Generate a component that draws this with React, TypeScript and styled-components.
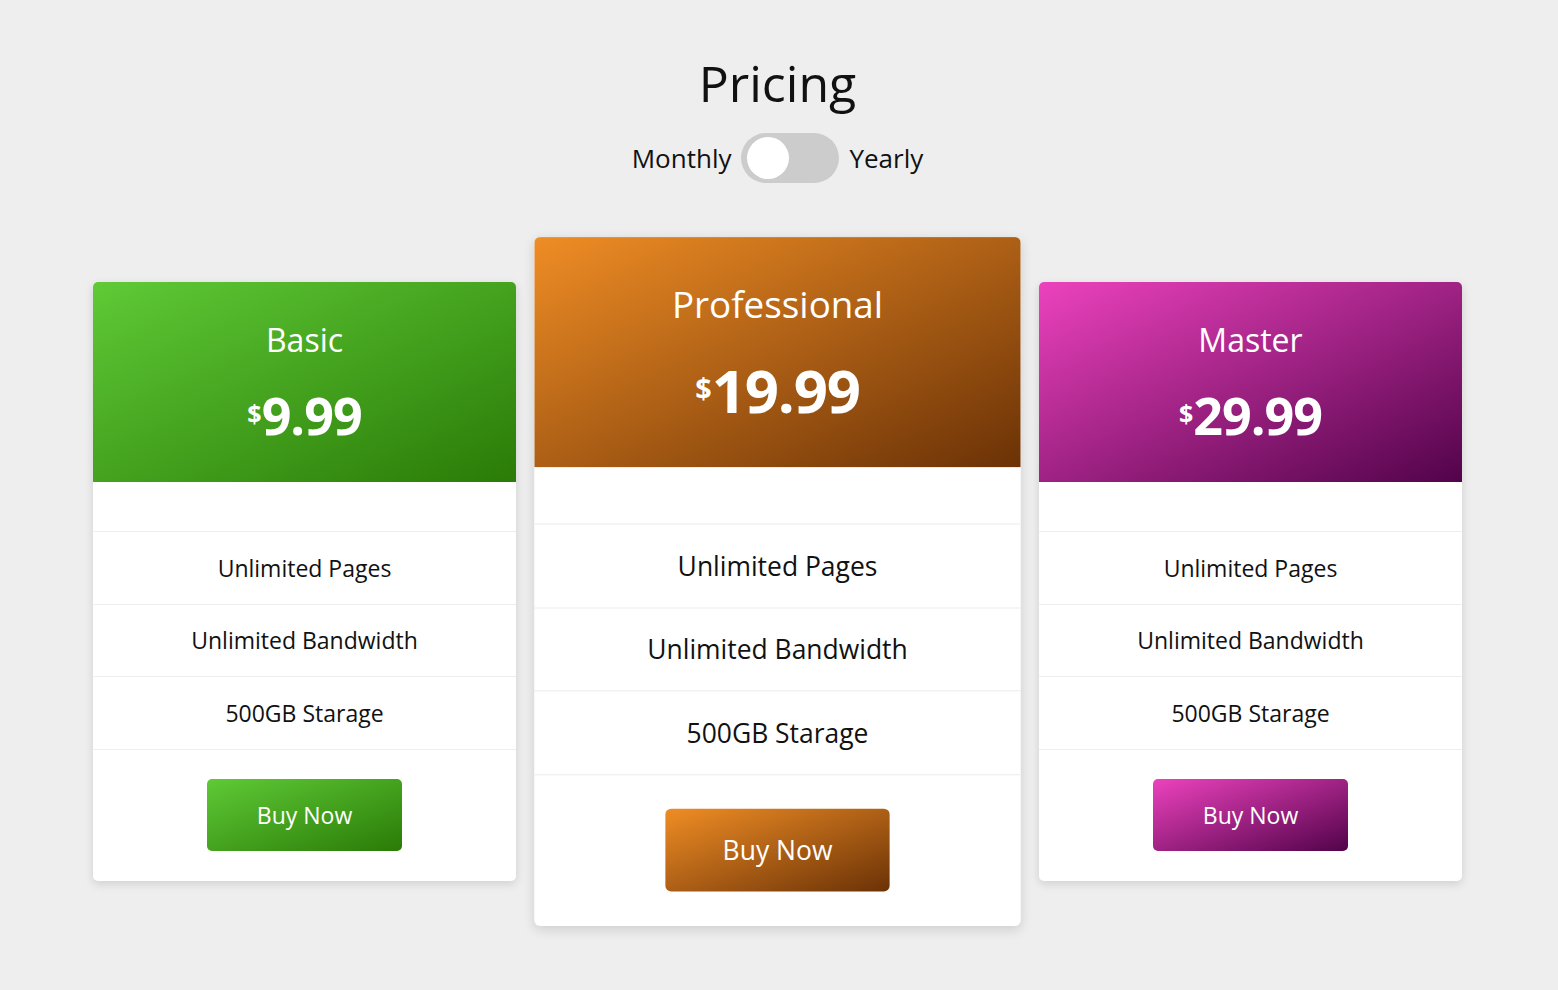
import React from "react";
import styled, { createGlobalStyle } from "styled-components";

const GlobalStyle = createGlobalStyle`
  html, body {
    margin: 0;
    padding: 0;
    background: #eeeeee;
    font-family: "Open Sans", "Noto Sans", sans-serif;
    color: #111111;
  }
  * { box-sizing: border-box; }
`;

type Plan = {
  name: string;
  price: string;
  from: string;
  to: string;
  featured?: boolean;
};

const plans: Plan[] = [
  { name: "Basic", price: "9.99", from: "#5fca36", to: "#2a7b07" },
  { name: "Professional", price: "19.99", from: "#ef8d25", to: "#6b3206", featured: true },
  { name: "Master", price: "29.99", from: "#ec42bd", to: "#52034a" },
];

const features = ["Unlimited Pages", "Unlimited Bandwidth", "500GB Starage"];

const Page = styled.main`
  display: flex;
  flex-direction: column;
  align-items: center;
  padding-top: 53px;
  padding-right: 3px;
  min-height: 990px;
`;

const Title = styled.h1`
  margin: 0;
  font-size: 50px;
  line-height: 60px;
  font-weight: 400;
  color: #111;
`;

const ToggleRow = styled.div`
  display: flex;
  align-items: center;
  gap: 10px;
  margin-top: 20px;
  height: 50px;
`;

const ToggleLabel = styled.span`
  font-size: 26px;
  color: #111;
`;

const Switch = styled.div`
  width: 98px;
  height: 50px;
  border-radius: 25px;
  background: #cccccc;
  display: flex;
  align-items: center;
  padding-left: 6px;
`;

const Knob = styled.div`
  width: 42px;
  height: 42px;
  border-radius: 50%;
  background: #ffffff;
`;

const Cards = styled.section`
  display: flex;
  justify-content: center;
  align-items: center;
  gap: 50px;
  margin-top: 99px;
`;

const Card = styled.article<{ $featured?: boolean }>`
  width: 423px;
  background: #ffffff;
  border-radius: 5px;
  overflow: hidden;
  box-shadow: 0 3px 10px rgba(0, 0, 0, 0.13);
  transform: ${(p) => (p.$featured ? "scale(1.15)" : "none")};
  position: relative;
  z-index: ${(p) => (p.$featured ? 1 : 0)};
`;

const Header = styled.header<{ $from: string; $to: string }>`
  height: 200px;
  display: flex;
  flex-direction: column;
  align-items: center;
  padding-top: 42px;
  color: #ffffff;
  background: linear-gradient(to bottom right, ${(p) => p.$from}, ${(p) => p.$to});
`;

const PlanName = styled.h2`
  margin: 0;
  font-size: 32px;
  line-height: 32px;
  font-weight: 400;
`;

const Price = styled.div`
  margin-top: 33px;
  font-size: 52px;
  line-height: 52px;
  font-weight: 700;
  letter-spacing: -1px;
`;

const Currency = styled.span`
  font-size: 25px;
  line-height: 1;
  vertical-align: 12px;
  letter-spacing: 0;
`;

const FeatureList = styled.ul`
  list-style: none;
  margin: 0;
  padding: 0;
`;

const Spacer = styled.li`
  height: 50px;
  border-bottom: 1px solid #eeeeee;
`;

const Feature = styled.li`
  height: 72.5px;
  display: flex;
  align-items: center;
  justify-content: center;
  font-size: 23px;
  color: #111;
  border-bottom: 1px solid #eeeeee;
`;

const Footer = styled.div`
  display: flex;
  justify-content: center;
  padding: 29.5px 0 29.5px;
`;

const BuyButton = styled.button<{ $from: string; $to: string }>`
  width: 195px;
  height: 72px;
  border: none;
  border-radius: 5px;
  color: #ffffff;
  font-family: "Open Sans", "Noto Sans", sans-serif;
  font-size: 23px;
  cursor: pointer;
  background: linear-gradient(to bottom right, ${(p) => p.$from}, ${(p) => p.$to});
`;

export default function App() {
  return (
    <>
      <GlobalStyle />
      <Page>
        <Title>Pricing</Title>
        <ToggleRow>
          <ToggleLabel>Monthly</ToggleLabel>
          <Switch>
            <Knob />
          </Switch>
          <ToggleLabel>Yearly</ToggleLabel>
        </ToggleRow>
        <Cards>
          {plans.map((plan) => (
            <Card key={plan.name} $featured={plan.featured}>
              <Header $from={plan.from} $to={plan.to}>
                <PlanName>{plan.name}</PlanName>
                <Price>
                  <Currency>$</Currency>
                  {plan.price}
                </Price>
              </Header>
              <FeatureList>
                <Spacer />
                {features.map((f) => (
                  <Feature key={f}>{f}</Feature>
                ))}
              </FeatureList>
              <Footer>
                <BuyButton $from={plan.from} $to={plan.to}>
                  Buy Now
                </BuyButton>
              </Footer>
            </Card>
          ))}
        </Cards>
      </Page>
    </>
  );
}
